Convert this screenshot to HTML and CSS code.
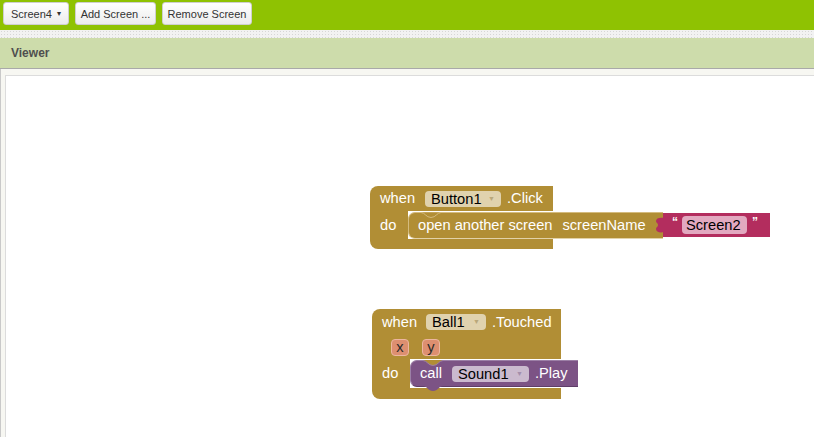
FILE: index.html
```html
<!DOCTYPE html>
<html>
<head>
<meta charset="utf-8">
<link rel="stylesheet" href="styles.css">
</head>
<body>
<div class="topbar">
  <div class="btn w1">Screen4 <span class="caret">▾</span></div>
  <div class="btn w2">Add Screen ...</div>
  <div class="btn w3">Remove Screen</div>
</div>
<div class="dots"></div>
<div class="viewer-head">Viewer</div>
<div class="content">
  <div class="workspace">

    <div class="block b1">
      <div class="ev-top top1">
        <span class="lbl">when</span>
        <span class="field fb dd1">Button1<span class="arr">▼</span></span>
        <span class="lbl g6">.Click</span>
      </div>
      <div class="do-row row1">
        <div class="do-col">do</div>
        <div class="stmt st1">
          <svg class="notch" width="20" height="7" viewBox="0 0 20 7"><path d="M0 0.5 C4 0.5 5 5.5 10 5.5 C15 5.5 16 0.5 20 0.5 Z" fill="#b18e35"/><path d="M0 0.5 C4 0.5 5 5.5 10 5.5 C15 5.5 16 0.5 20 0.5" fill="none" stroke="#d4bb7e" stroke-width="1"/></svg>
          <span class="lbl">open another screen</span>
          <span class="lbl g10">screenName</span>
          <div class="strblk">
            <svg class="tab" width="9" height="18" viewBox="0 0 9 18"><path d="M9 0 L9 2 C5 1 1 2 1 5 C1 7 3 7 3 9 C3 11 1 11 1 13 C1 16 5 17 9 16 L9 18 Z" fill="#b32d5e"/></svg>
            <span class="q">&#8220;</span>
            <span class="field fs">Screen2</span>
            <span class="q">&#8221;</span>
          </div>
        </div>
      </div>
      <div class="ev-bot bot1"></div>
    </div>

    <div class="block b2">
      <div class="ev-top top2">
        <span class="lbl">when</span>
        <span class="field fb dd2">Ball1<span class="arr">▼</span></span>
        <span class="lbl g6">.Touched</span>
      </div>
      <div class="param-row">
        <span class="param">x</span>
        <span class="param">y</span>
      </div>
      <div class="do-row row2">
        <div class="do-col">do</div>
        <div class="stmt call">
          <svg class="notch" width="20" height="7" viewBox="0 0 20 7"><path d="M0 0 L0 0.5 C4 0.5 5 5.5 10 5.5 C15 5.5 16 0.5 20 0.5 L20 0 Z" fill="#b18e35"/><path d="M0 0.5 C4 0.5 5 5.5 10 5.5 C15 5.5 16 0.5 20 0.5" fill="none" stroke="#9c7fa6" stroke-width="1"/></svg>
          <svg class="nexttab" width="20" height="6" viewBox="0 0 20 6"><path d="M0 0 C4 0 5 5 10 5 C15 5 16 0 20 0 Z" fill="#7c5385"/></svg>
          <span class="lbl">call</span>
          <span class="field fp dd3">Sound1<span class="arr parr">▼</span></span>
          <span class="lbl g6">.Play</span>
        </div>
      </div>
      <div class="ev-bot bot2"></div>
    </div>

  </div>
</div>
</body>
</html>
```
FILE: styles.css
```css
html, body {
  margin: 0;
  padding: 0;
}
body {
  font-family: "Liberation Sans", Arial, sans-serif;
  width: 814px;
  height: 437px;
  overflow: hidden;
  display: flex;
  flex-direction: column;
  background: #fff;
}
.topbar {
  height: 30px;
  flex: none;
  box-sizing: border-box;
  background: #8fc202;
  display: flex;
  gap: 6px;
  padding: 2px 0 0 3px;
}
.btn {
  height: 23px;
  box-sizing: border-box;
  border: 1px solid #cfcfcf;
  border-radius: 3px;
  background: linear-gradient(#ffffff, #ececec);
  font-size: 11px;
  color: #333;
  display: flex;
  align-items: center;
  justify-content: center;
}
.caret {
  font-size: 8px;
  margin-left: 5px;
}
.w1 { width: 66px; }
.w2 { width: 81px; }
.w3 { width: 90px; }
.dots {
  height: 8px;
  flex: none;
  background-color: #f2f2f2;
  background-image: radial-gradient(#d6d6d6 0.8px, transparent 0.9px);
  background-size: 3px 3px;
}
.viewer-head {
  height: 30px;
  flex: none;
  background: #cddcab;
  border-bottom: 1px solid #a9a9a9;
  font-weight: bold;
  font-size: 12px;
  color: #4f4f4f;
  padding-left: 11px;
  display: flex;
  align-items: center;
}
.content {
  flex: 1;
  background: #f7f7f2;
  border-left: 1px solid #c9c9c9;
  padding: 6px 0 0 4px;
  display: flex;
}
.workspace {
  position: relative;
  flex: 1;
  background: #fff;
  border-left: 1px solid #dcdcdc;
  border-top: 1px solid #dcdcdc;
}

/* blocks */
.block {
  position: absolute;
  color: #fff;
  font-size: 14.67px;
  display: flex;
  flex-direction: column;
  align-items: flex-start;
}
.b1 { left: 364px; top: 110px; }
.b2 { left: 366px; top: 233px; }

.ev-top {
  background: #b18e35;
  border-radius: 8px 0 0 0;
  display: flex;
  align-items: center;
  padding-left: 10px;
  box-sizing: border-box;
}
.top1 { width: 183px; height: 25px; }
.top2 { width: 189px; height: 26px; }
.lbl { white-space: nowrap; line-height: 17px; }
.g6 { margin-left: 6px; }
.g10 { margin-left: 10px; }

.field {
  color: #000;
  height: 16px;
  line-height: 16px;
  border-radius: 4px;
  box-sizing: border-box;
  padding-left: 6px;
  display: flex;
  align-items: center;
  white-space: nowrap;
}
.fb { background: #e0d2ae; }
.dd1 { width: 76px; margin-left: 10px; }
.dd2 { width: 60px; margin-left: 9px; }
.arr {
  font-size: 7px;
  color: #b9a77a;
  margin-left: auto;
  margin-right: 6px;
}
.parr { color: #a48eab; }

.param-row {
  background: #b18e35;
  width: 189px;
  height: 24px;
  display: flex;
  align-items: center;
  padding-left: 19px;
  gap: 13px;
  box-sizing: border-box;
}
.param {
  width: 18px;
  height: 17px;
  box-sizing: border-box;
  background: #dd8f70;
  border: 1px solid #ecb6a0;
  border-radius: 4px;
  color: #2a2a2a;
  font-size: 14.67px;
  line-height: 15px;
  text-align: center;
}

.do-row {
  display: flex;
  align-items: stretch;
}
.row1 { height: 28px; }
.row2 { height: 29px; }
.do-col {
  width: 38px;
  background: #b18e35;
  box-sizing: border-box;
  padding-left: 10px;
  display: flex;
  align-items: center;
  line-height: 17px;
}
.stmt {
  position: relative;
  background: #b18e35;
  box-sizing: border-box;
  border-top: 1px solid #d4bb7e;
  border-left: 1px solid #d4bb7e;
  border-bottom: 1px solid #e2d2a8;
  border-radius: 7px 0 0 7px;
  display: flex;
  align-items: center;
  padding-left: 9px;
}
.st1 {
  width: 255px;
  height: 27px;
  margin-top: 1px;
}
.notch {
  position: absolute;
  left: 12px;
  top: -1px;
}
.strblk {
  position: absolute;
  left: 254px;
  top: 0px;
  width: 107px;
  height: 24px;
  background: #b32d5e;
  display: flex;
  align-items: center;
  padding-left: 9px;
  box-sizing: border-box;
}
.tab {
  position: absolute;
  left: -8px;
  top: 3px;
}
.q {
  font-size: 12px;
  line-height: 12px;
  align-self: flex-start;
  margin-top: 3px;
  color: #fff;
  font-weight: bold;
}
.fs {
  background: #e2a9c0;
  width: 65px;
  height: 18px;
  margin: 0 5px 0 4px;
  padding-left: 4px;
}
.call {
  background: #7c5385;
  border-top: 1px solid #9c7fa6;
  border-left: 1px solid #9c7fa6;
  border-bottom: 1px solid #5f3d68;
  width: 168px;
  height: 27px;
  margin-top: 1px;
}
.nexttab {
  position: absolute;
  left: 12px;
  bottom: -6px;
}
.fp { background: #cbbace; }
.dd3 { width: 77px; margin-left: 10px; }

.ev-bot {
  background: #b18e35;
  border-radius: 0 0 0 8px;
}
.bot1 { width: 183px; height: 10px; }
.bot2 { width: 189px; height: 11px; }
```
